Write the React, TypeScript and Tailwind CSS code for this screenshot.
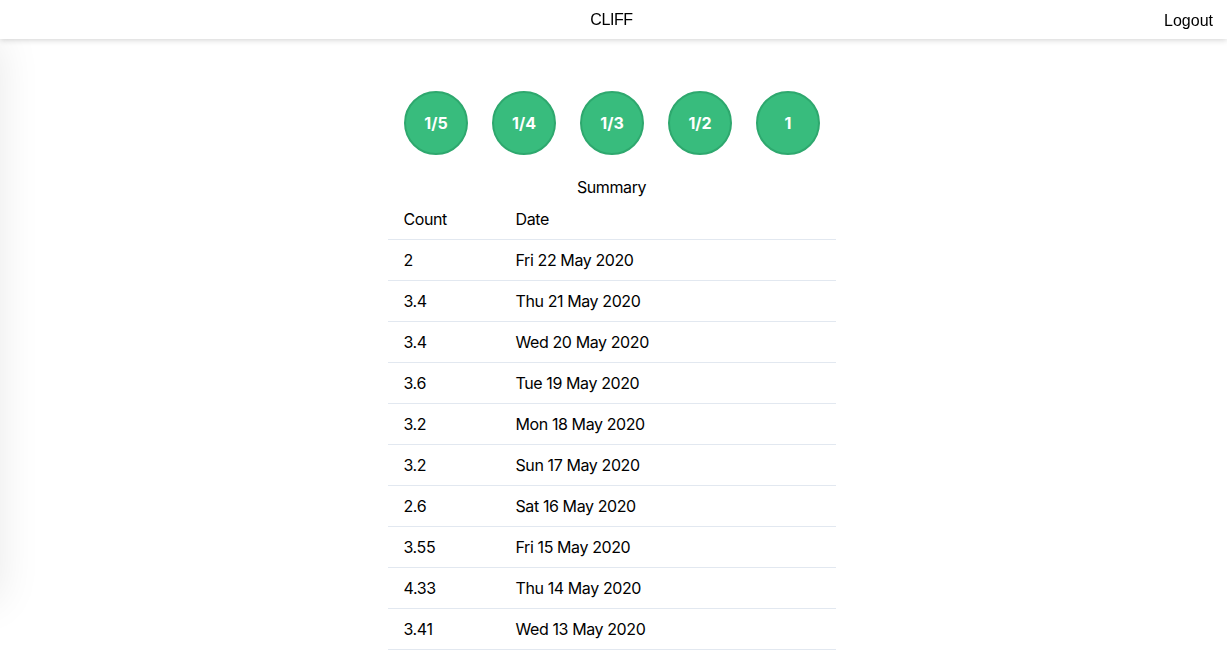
const fractions = ["1/5", "1/4", "1/3", "1/2", "1"];

const rows = [
  { count: "2", date: "Fri 22 May 2020" },
  { count: "3.4", date: "Thu 21 May 2020" },
  { count: "3.4", date: "Wed 20 May 2020" },
  { count: "3.6", date: "Tue 19 May 2020" },
  { count: "3.2", date: "Mon 18 May 2020" },
  { count: "3.2", date: "Sun 17 May 2020" },
  { count: "2.6", date: "Sat 16 May 2020" },
  { count: "3.55", date: "Fri 15 May 2020" },
  { count: "4.33", date: "Thu 14 May 2020" },
  { count: "3.41", date: "Wed 13 May 2020" },
];

const App = () => {
  return (
    <div className="min-h-screen bg-white text-black font-['Inter',sans-serif] overflow-hidden">
      {/* off-canvas sidebar, only its shadow shows */}
      <div className="fixed top-[40px] -left-[300px] w-[300px] h-[560px] bg-white shadow-[0_0_40px_rgba(0,0,0,0.09)]" />
      <header className="relative z-10 h-[39px] flex items-center justify-center pr-[4px] bg-white shadow-[0_1px_6px_rgba(0,0,0,0.18)]">
        <span className="text-[16px] tracking-[-0.4px] font-['Liberation_Sans',sans-serif]">CLIFF</span>
        <button className="absolute right-[14px] top-[9px] text-[16px] font-['Liberation_Sans',sans-serif]">
          Logout
        </button>
      </header>
      <main className="flex flex-col items-center pt-[52px] pr-[4px] tracking-[-0.4px]">
        <div className="flex gap-[24px] ml-[1px]">
          {fractions.map((f) => (
            <div
              key={f}
              className="w-[64px] h-[64px] rounded-full bg-[#38bc7d] border-2 border-[#2ea86e] flex items-center justify-center text-white font-bold text-[16px] tracking-normal"
            >
              {f}
            </div>
          ))}
        </div>
        <div className="mt-[20px] w-[448px] text-[16px]">
          <div className="text-center leading-[24px]">Summary</div>
          <table className="w-full border-collapse">
            <thead>
              <tr className="border-b border-[#e2e8f0]">
                <th className="w-[112px] text-left font-normal px-4 py-2 leading-[24px]">Count</th>
                <th className="text-left font-normal px-4 py-2 leading-[24px]">Date</th>
              </tr>
            </thead>
            <tbody>
              {rows.map((r) => (
                <tr key={r.date} className="border-b border-[#e2e8f0]">
                  <td className="px-4 py-2 leading-[24px]">{r.count}</td>
                  <td className="px-4 py-2 leading-[24px]">{r.date}</td>
                </tr>
              ))}
            </tbody>
          </table>
        </div>
      </main>
    </div>
  );
};

export default App;
